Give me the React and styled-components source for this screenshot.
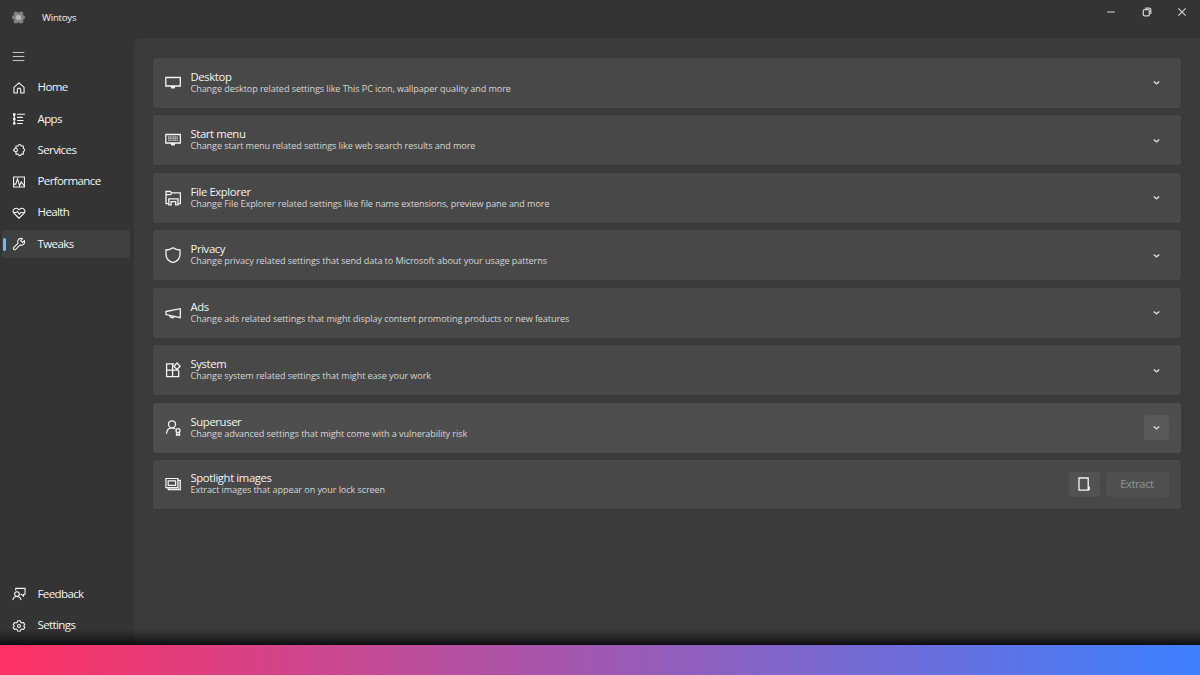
import React, { useState } from 'react'

import styled, { createGlobalStyle } from 'styled-components'


const GlobalStyle = createGlobalStyle`
    * {
        box-sizing: border-box;
    }

    body {
        margin: 0;
        overflow: hidden;
        background: #343434;
        font-family: "Open Sans", "Noto Sans", sans-serif;
        color: #f4f4f4;
    }

    button {
        border: 0;
        padding: 0;
        background: none;
        color: inherit;
        font-family: inherit;
    }
`

// every icon is drawn on a 16 x 16 grid
const icons = {
    menu: <path d="M1.800 3.700h12.400M1.800 8h12.400M1.800 12.300h12.400" />,
    home: <path d="M2.200 7.300 8 2.200l5.800 5.100v6.500h-3.900V10a1.900 1.900 0 0 0-3.800 0v3.800H2.200z" strokeLinejoin="round" />,
    apps: (
        <>
            <path d="M5.800 2.600h9M5.800 6.100h6.500M5.800 9.700h7.400M5.800 13.200h6.500" />
            <path d="M1.200 1.400h2.800v2.800H1.200zM1.200 6.500h2.800v2.800H1.200zM1.200 11.600h2.800v2.800H1.200z" fill="currentColor" stroke="none" />
            <path d="M2.600 2v12" />
        </>
    ),
    services: <path d="M4.500 6V3.500h2.600a1.700 1.700 0 0 1 3.400 0H13v2.800a1.800 1.800 0 0 1 0 3.500v2.900h-2.500a1.700 1.700 0 0 1-3.400 0H4.500v-2.500L2 8.500c-.4-.3-.4-.7 0-1L3.700 6h1.100c1.800.3 2 3.400 0 3.900" strokeLinejoin="round" />,
    performance: (
        <>
            <path d="M1.800 2.200h12.400v11.600H1.800z" />
            <path d="M2 10.400h2.300l2-6 2.400 8 1.800-4.500 3.500 4.600" />
        </>
    ),
    health: (
        <>
            <path d="M8 14 2.400 8.400a3.400 3.400 0 0 1 0-4.800 3.300 3.300 0 0 1 4.800 0l.8.800.8-.8a3.300 3.300 0 0 1 4.800 0 3.400 3.400 0 0 1 0 4.800z" />
            <path d="M2.200 7.500h2.400l1.700-1.300 2.100 3L10 7.500h3.600" />
        </>
    ),
    tweaks: <path d="M14.200 4.300 12 6.300 9.900 4.200l2-2.200a3.900 3.900 0 0 0-5.100 5.200l-5 4.900a1.600 1.600 0 0 0 2.200 2.200l5-5.100a3.900 3.900 0 0 0 5.200-4.900z" />,
    feedback: (
        <>
            <circle cx="5.700" cy="8.100" r="2.700" />
            <path d="M.9 15c.4-2.500 2-4.100 4.700-4.100s4.300 1.600 4.800 4.100M4.300 3.900V1.600h10.600v6.700h-1.700v2.200L10.500 8.300H9.700" />
        </>
    ),
    settings: (
        <>
            <path d="m6.600 2 2.800 0 .5 1.700 1.500.8 1.800-.5 1.400 2.400L13.300 8l1.300 1.600-1.400 2.400-1.800-.5-1.500.8-.5 1.700H6.600l-.5-1.700-1.500-.8-1.800.5-1.400-2.400L2.700 8 1.400 6.400 2.800 4l1.800.5 1.500-.8z" strokeLinejoin="round" />
            <circle cx="8" cy="8" r="1.700" />
        </>
    ),
    desktop: (
        <>
            <path d="M.8 2.500h14.500v8.500H.8z" />
            <path d="M5.500 11h5l-.9 2.500H6.400z" fill="currentColor" stroke="none" />
        </>
    ),
    start: (
        <>
            <path d="M.8 2.500h14.500v8.500H.8z" />
            <path d="M3 5h10M3 6.700h10M3 8.400h10" strokeDasharray="1.300 .4" opacity=".65" />
            <path d="M5.500 11h5l-.9 2.500H6.400z" fill="currentColor" stroke="none" />
        </>
    ),
    explorer: (
        <>
            <path d="M3.400 13.600H1V1.500h4.500l1 1.300h8.900v10.800h-2M1 4.600h4.500l1.200-1.500" />
            <path d="M3.800 14.900V8.900h9.200v6h-2.300v-3.300H6.100v3.300z" />
        </>
    ),
    privacy: <path d="M8 .8c2 1.600 4.300 2.200 7 2.200v4.500c0 3.800-2.500 6.600-7 8.200-4.500-1.600-7-4.400-7-8.200V3c2.700 0 5-.6 7-2.200z" />,
    ads: (
        <>
            <path d="M1 6.500 15.300 3.700v9L1 9.600z" />
            <path d="M4.800 10.500c0 2.700 3.900 2.900 4.200.9" />
        </>
    ),
    system: (
        <>
            <path d="M8.900 1.900H1.600v12.700H13.700V8.500M1.600 8.200h12.100M7.600 2v12.500" />
            <path d="m12 1 3.100 3.200L12 7.500 8.900 4.200z" />
        </>
    ),
    superuser: (
        <>
            <circle cx="7" cy="4.300" r="3.500" />
            <path d="M1.500 13.700c.3-3.700 2.500-5.900 5.500-5.900 1.300 0 2.400.3 3.300 1" />
            <circle cx="13" cy="10.600" r="2" />
            <path d="M11.500 12.400v3l1.500-.8 1.500.8v-3" />
        </>
    ),
    images: (
        <>
            <path d="M.9 2.500h12v9.200H.9z" />
            <path d="M3.200 4.900h7.400v4.400H3.200z" />
            <path d="M13 4.300h2.300v9.400H3.200v-1.900" />
            <path d="M14.100 5v7.600H4" strokeWidth=".8" opacity=".6" />
        </>
    ),
    folder: (
        <>
            <path d="M3 2h9.200v12.200H3z" />
            <path d="M12.200 10.400c1.300.3 1.500 2.900.2 3.800" strokeWidth="1.500" />
        </>
    ),
    chevron: <path d="m5 6.900 3 2.500 3-2.500" strokeWidth="1.400" />,
    minimize: <path d="M4.300 8h7.400" />,
    restore: (
        <>
            <rect x="4.300" y="5.600" width="6" height="6.200" rx="1.200" />
            <path d="M6 4.100h3.900a1.900 1.900 0 0 1 1.900 1.900v4" />
        </>
    ),
    close: <path d="m4.300 4.300 7.400 7.400m0-7.400-7.400 7.400" />,
}

function Icon({ name, size = 16, weight = 1.1 }) {
    return (
        <Svg viewBox="0 0 16 16" width={size} height={size} strokeWidth={weight}>
            {icons[name]}
        </Svg>
    )
}

function Logo() {
    return (
        <Svg viewBox="0 0 16 16" width="15" height="15">
            <g fill="#808080">
                <circle cx="5.300" cy="4" r="2.500" />
                <circle cx="10.700" cy="4" r="2.500" />
                <circle cx="12.700" cy="8" r="2.300" />
                <circle cx="10.700" cy="12" r="2.500" />
                <circle cx="5.300" cy="12" r="2.500" />
                <circle cx="3.300" cy="8" r="2.300" />
                <circle cx="8" cy="8" r="5.400" />
            </g>
            <circle cx="8" cy="8" r="3.100" fill="#a6a6a6" />
            <path d="M7.200 5.600v4.800M5.400 7.300l5 1.300M9.400 6v3.500" stroke="#cacaca" />
        </Svg>
    )
}

const mainLinks = [
    { id: 'home', label: 'Home' },
    { id: 'apps', label: 'Apps' },
    { id: 'services', label: 'Services' },
    { id: 'performance', label: 'Performance' },
    { id: 'health', label: 'Health' },
    { id: 'tweaks', label: 'Tweaks' },
]

const footerLinks = [
    { id: 'feedback', label: 'Feedback' },
    { id: 'settings', label: 'Settings' },
]

const sections = [
    { icon: 'desktop', title: 'Desktop', text: 'Change desktop related settings like This PC icon, wallpaper quality and more' },
    { icon: 'start', title: 'Start menu', text: 'Change start menu related settings like web search results and more' },
    { icon: 'explorer', title: 'File Explorer', text: 'Change File Explorer related settings like file name extensions, preview pane and more' },
    { icon: 'privacy', title: 'Privacy', text: 'Change privacy related settings that send data to Microsoft about your usage patterns' },
    { icon: 'ads', title: 'Ads', text: 'Change ads related settings that might display content promoting products or new features' },
    { icon: 'system', title: 'System', text: 'Change system related settings that might ease your work' },
    { icon: 'superuser', title: 'Superuser', text: 'Change advanced settings that might come with a vulnerability risk', hovered: true },
]

function NavLinks({ links, active, onSelect }) {
    return links.map((link) => (
        <NavItem key={link.id} $active={active === link.id} onClick={() => onSelect(link.id)}>
            <Icon name={link.id} size={14} weight={1.25} />
            {link.label}
        </NavItem>
    ))
}

export default function App() {

    const [active, setActive] = useState('tweaks');

    return (
        <Page>
            <GlobalStyle />
            <Window>
                <TitleBar>
                    <Brand>
                        <Logo />
                        Wintoys
                    </Brand>
                    <WindowButtons>
                        <WindowButton><Icon name="minimize" /></WindowButton>
                        <WindowButton><Icon name="restore" weight={1.3} /></WindowButton>
                        <WindowButton><Icon name="close" weight={1.2} /></WindowButton>
                    </WindowButtons>
                </TitleBar>
                <Body>
                    <Sidebar>
                        <MenuButton><Icon name="menu" size={15} weight={1} /></MenuButton>
                        <NavLinks links={mainLinks} active={active} onSelect={setActive} />
                        <Spacer />
                        <NavLinks links={footerLinks} active={active} onSelect={setActive} />
                    </Sidebar>
                    <Content>
                        {
                            sections.map((item) => (
                                <Card key={item.title} $hovered={item.hovered}>
                                    <Icon name={item.icon} weight={1.3} />
                                    <CardText>
                                        <Title>{item.title}</Title>
                                        <Description>{item.text}</Description>
                                    </CardText>
                                    <Expander $hovered={item.hovered}>
                                        <Icon name="chevron" size={15} />
                                    </Expander>
                                </Card>
                            ))
                        }
                        <Card $short>
                            <Icon name="images" weight={1.2} />
                            <CardText>
                                <Title>Spotlight images</Title>
                                <Description>Extract images that appear on your lock screen</Description>
                            </CardText>
                            <Actions>
                                <FolderButton><Icon name="folder" weight={1.3} /></FolderButton>
                                <ExtractButton disabled>Extract</ExtractButton>
                            </Actions>
                        </Card>
                    </Content>
                </Body>
            </Window>
            <Shade />
            <Stripe />
        </Page>
    )
}

const Svg = styled.svg`
    display: block;
    flex: none;
    fill: none;
    stroke: currentColor;

    g, circle[fill] {
        stroke: none;
    }
`

const Page = styled.div`
    display: flex;
    flex-direction: column;
    width: 1200px;
    height: 675px;
`

const Window = styled.div`
    display: flex;
    flex-direction: column;
    flex: 1;
    min-height: 0;
`

const TitleBar = styled.header`
    display: flex;
    justify-content: space-between;
    height: 38px;
`

const Brand = styled.div`
    display: flex;
    align-items: center;
    gap: 16px;
    height: 35px;
    padding-left: 11px;
    font-size: 9.600px;
    letter-spacing: -0.200px;
`

const WindowButtons = styled.div`
    display: flex;
    height: 24px;
`

const WindowButton = styled.button`
    display: flex;
    align-items: center;
    justify-content: center;
    width: 35.500px;
    color: #cfcfcf;
`

const Body = styled.div`
    display: flex;
    flex: 1;
    min-height: 0;
`

const Sidebar = styled.nav`
    display: flex;
    flex-direction: column;
    gap: 3.250px;
    width: 134px;
    padding: 5px 4px 6px 2px;
`

const MenuButton = styled.button`
    display: flex;
    align-items: center;
    height: 27px;
    padding-left: 9px;
    color: #d0d0d0;
`

const NavItem = styled.button`
    display: flex;
    align-items: center;
    gap: 11.500px;
    height: 28px;
    padding: 0 0 1px 7px;
    border-left: 3px solid transparent;
    border-radius: 3px;
    background: ${({ $active }) => ($active ? '#404040' : 'transparent')};
    font-size: 11.500px;
    letter-spacing: -0.600px;
    position: relative;

    svg {
        position: relative;
        top: 1px;
    }

    &::before {
        content: '';
        display: ${({ $active }) => ($active ? 'block' : 'none')};
        position: absolute;
        left: -2px;
        top: 8px;
        width: 3px;
        height: 13px;
        border-radius: 2px;
        background: #6cbdea;
    }
`

const Spacer = styled.div`
    flex: 1;
`

const Content = styled.main`
    display: flex;
    flex-direction: column;
    flex: 1;
    gap: 7.500px;
    padding: 19.500px 19px 0 19px;
    border-top-left-radius: 6px;
    background: #3b3b3b;
`

const Card = styled.section`
    display: flex;
    align-items: center;
    height: ${({ $short }) => ($short ? '48.500px' : '50px')};
    padding: 0 12.500px 0 12px;
    border-radius: 3px;
    background: ${({ $hovered }) => ($hovered ? '#4e4e4e' : '#484848')};
    box-shadow: 0 0 0 1px rgba(0, 0, 0, 0.030);
`

const CardText = styled.div`
    flex: 1;
    padding-left: 9.500px;
    white-space: nowrap;
`

const Title = styled.div`
    font-size: 11.300px;
    line-height: 12px;
    letter-spacing: -0.380px;
`

const Description = styled.div`
    color: #d6d6d6;
    font-size: 9.100px;
    line-height: 12px;
    letter-spacing: -0.090px;
`

const Expander = styled.button`
    display: flex;
    align-items: center;
    justify-content: center;
    width: 25px;
    height: 25px;
    border-radius: 3px;
    background: ${({ $hovered }) => ($hovered ? '#595959' : 'transparent')};
    color: #dcdcdc;
`

const Actions = styled.div`
    display: flex;
    gap: 6px;
`

const FolderButton = styled.button`
    display: flex;
    align-items: center;
    justify-content: center;
    width: 31px;
    height: 25px;
    border-radius: 3px;
    background: #525252;
`

const ExtractButton = styled.button`
    width: 63px;
    height: 25px;
    padding-bottom: 2px;
    border-radius: 3px;
    background: #505050;
    color: #929292;
    font-size: 11px;
    letter-spacing: -0.300px;
`

// soft shadow that the window drops on the stripe
const Shade = styled.div`
    height: 16px;
    margin-top: -16px;
    background: linear-gradient(rgba(10, 10, 15, 0), rgba(10, 10, 15, 0.400) 50%, #0e0e12);
    pointer-events: none;
    z-index: 1;
`

const Stripe = styled.div`
    height: 30px;
    background: linear-gradient(90deg, #ff3164, #3d80ff);
`
